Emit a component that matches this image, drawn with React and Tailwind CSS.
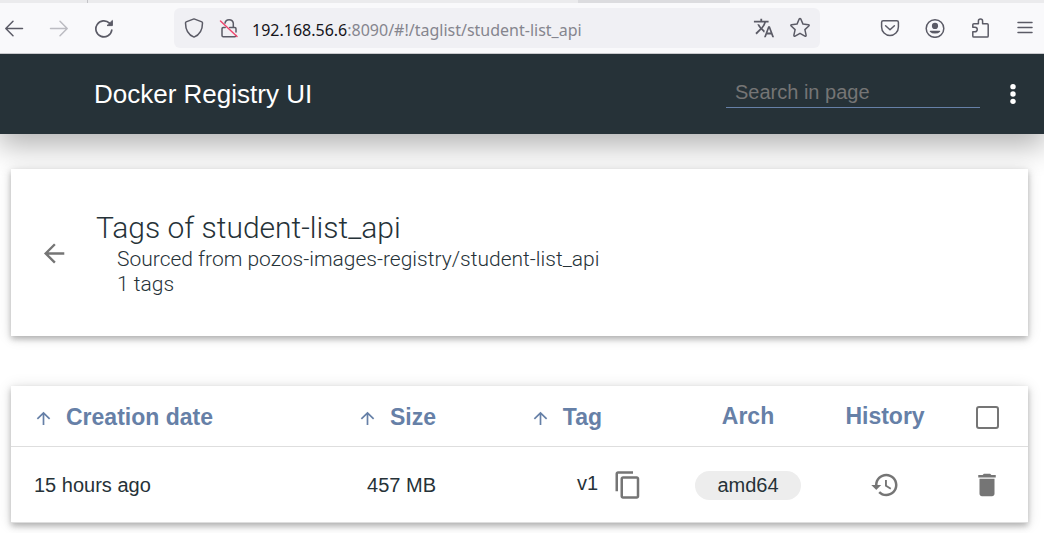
import React from "react";

const stroke = {
  fill: "none",
  stroke: "currentColor",
  strokeWidth: 1.5,
  strokeLinecap: "round",
  strokeLinejoin: "round",
};

function Svg({ size, box = "0 0 24 24", className = "", children, ...rest }) {
  return (
    <svg width={size} height={size} viewBox={box} className={"block shrink-0 " + className} aria-hidden="true" {...rest}>
      {children}
    </svg>
  );
}

function BrowserToolbar() {
  return (
    <div className="relative z-10">
      <div className="flex h-[3px] bg-[#ebebed]">
        <div className="w-[88px] border-r border-[#c4c4c8]" />
        <div className="ml-[490px] w-[152px] bg-[#dcdcdf]" />
      </div>
      <div className="flex h-[51px] items-center border-b border-[#c9c9cd] bg-[#f9f9fb] text-[#5b5b66]">
        <div className="flex w-[174px] shrink-0 items-center gap-[25px] pl-1">
          <button type="button" aria-label="Back">
            <Svg size={20} box="0 0 20 20" {...stroke}>
              <path d="M2 10.5H18.5M9 3.3L1.8 10.5L9 17.7" />
            </Svg>
          </button>
          <button type="button" aria-label="Forward" disabled className="text-[#bcbcc2]">
            <Svg size={20} box="0 0 20 20" {...stroke}>
              <path d="M1.5 10.5H18M11 3.3L18.2 10.5L11 17.7" />
            </Svg>
          </button>
          <button type="button" aria-label="Reload">
            <Svg size={20} box="0 0 20 20" {...stroke} strokeWidth={1.7}>
              <path d="M17.8 12A8 8 0 1 1 15.5 5.2" />
              <path d="M18.4 2.8V7.6H13.4Z" fill="currentColor" strokeWidth="1" />
            </Svg>
          </button>
        </div>
        <div className="flex h-10 min-w-0 flex-1 items-center rounded-md bg-[#f0f0f4] pr-[9px] pl-[10px]">
          <Svg size={20} box="0 0 20 20" {...stroke}>
            <path d="M10 0.9L17.9 3.9C18.4 4.1 18.5 4.4 18.5 4.9C18.5 10.5 16.6 16.4 10 19.1C3.4 16.4 1.5 10.5 1.5 4.9C1.5 4.4 1.6 4.1 2.1 3.9Z" />
          </Svg>
          <Svg size={20} box="0 0 20 20" className="ml-[15px]" {...stroke}>
            <path d="M6 5.2A4.2 4.2 0 0 1 14.3 5.2V9M6.2 9.5H4.2Q3 9.5 3 10.7V17.6Q3 18.8 4.2 18.8H15.8Q17 18.8 17 17.6M10.7 9.5H15.8Q17 9.5 17 10.7V14" />
            <path d="M1.5 3L18 18.5" stroke="#f0476f" />
          </Svg>
          <div className="relative ml-[13px] min-w-0 flex-1 pt-[3px] font-['Noto_Sans',sans-serif] text-[16px] leading-6">
            <div className="truncate text-[#85858e]" aria-hidden="true">
              <span className="text-[#15141a]">192.168.56.6</span>:8090/#!/taglist/student-list_api
            </div>
            <input
              type="text"
              aria-label="Address"
              defaultValue="192.168.56.6:8090/#!/taglist/student-list_api"
              className="absolute inset-0 w-full bg-transparent text-transparent outline-none"
            />
          </div>
          <button type="button" aria-label="Translate page">
            <Svg size={22} fill="currentColor">
              <path d="M12.87 15.07l-2.54-2.51.03-.03c1.74-1.94 2.98-4.17 3.71-6.53H17V4h-7V2H8v2H1v1.99h11.17C11.5 7.92 10.44 9.75 9 11.35 8.07 10.32 7.3 9.19 6.69 8h-2c.73 1.63 1.73 3.17 2.98 4.56l-5.09 5.02L4 19l5-5 3.11 3.11.76-2.04zM18.5 10h-2L12 22h2l1.12-3h4.75L21 22h2l-4.5-12zm-2.62 7l1.62-4.33L19.12 17h-3.24z" />
            </Svg>
          </button>
          <button type="button" aria-label="Bookmark page" className="ml-[14px]">
            <Svg size={22} box="0 0 22 22" {...stroke}>
              <path d="M10.2 2Q11 0.8 11.8 2L14 7.1L19.4 7.7Q20.7 8 19.8 9L15.9 12.6L17.1 18.2Q17.1 19.6 15.9 19.1L11 16.3L6.1 19.1Q4.9 19.6 4.9 18.2L6.1 12.6L2.2 9Q1.3 8 2.6 7.7L8 7.1Z" />
            </Svg>
          </button>
        </div>
        <div className="flex w-56 shrink-0 items-center justify-end gap-[25px] pr-[9px]">
          <button type="button" aria-label="Save to Pocket">
            <Svg size={20} box="0 0 20 20" {...stroke}>
              <path d="M3.2 2.7H16.8Q18.4 2.7 18.4 4.3V9A8.4 8.4 0 0 1 1.6 9V4.3Q1.6 2.7 3.2 2.7Z" />
              <path d="M5.6 7.7L10 11.8L14.4 7.7" />
            </Svg>
          </button>
          <button type="button" aria-label="Account">
            <Svg size={20} box="0 0 20 20">
              <circle cx="10" cy="10.5" r="8.8" {...stroke} />
              <circle cx="10" cy="7.9" r="3.1" fill="currentColor" />
              <path d="M5.3 12.8H14.7Q15.6 12.8 15.1 13.7A6 4 0 0 1 4.9 13.7Q4.4 12.8 5.3 12.8Z" fill="currentColor" />
            </Svg>
          </button>
          <button type="button" aria-label="Extensions">
            <Svg size={20} box="0 0 20 20" {...stroke}>
              <path d="M2.8 9.3V6.8Q2.8 5.7 3.9 5.7H8.4V3.2A2 2 0 0 1 12.6 3.2V5.7H17.1Q18.2 5.7 18.2 6.8V17.9Q18.2 19 17.1 19H3.9Q2.8 19 2.8 17.9V13.8H5A2.2 2.2 0 0 0 5 9.3Z" />
            </Svg>
          </button>
          <button type="button" aria-label="Application menu">
            <Svg size={20} box="0 0 20 20" {...stroke}>
              <path d="M3 4.5H17M3 9.5H17M3 14.5H17" />
            </Svg>
          </button>
        </div>
      </div>
    </div>
  );
}

function AppHeader() {
  return (
    <header className="relative flex h-20 items-center bg-[#263238] pr-[18px] pl-[94px] text-white shadow-[0_10px_30px_2px_rgba(0,0,0,0.3)]">
      <h1 className="flex-1 text-[26px] leading-8">Docker Registry UI</h1>
      <input
        type="search"
        aria-label="Search in page"
        placeholder="Search in page"
        className="mb-1 h-8 w-[254px] border-b border-[#6680a7] bg-transparent px-[9px] pt-[2px] text-[20px] outline-none placeholder:text-[#757575]"
      />
      <button type="button" aria-label="Menu" className="ml-[20px]">
        <Svg size={26} fill="currentColor">
          <circle cx="12" cy="5.2" r="2.5" />
          <circle cx="12" cy="12" r="2.5" />
          <circle cx="12" cy="18.8" r="2.5" />
        </Svg>
      </button>
    </header>
  );
}

function SortButton({ children }) {
  return (
    <button type="button" className="inline-flex items-center gap-[14px] align-middle">
      <Svg size={17} box="0 0 18 18" className="mt-[3px]" fill="none" stroke="currentColor" strokeWidth="1.8">
        <path d="M9 16V3M2.5 9.5L9 3L15.5 9.5" />
      </Svg>
      <span>{children}</span>
    </button>
  );
}

const card = "relative bg-white shadow-[0_3px_6px_0_rgba(0,0,0,0.26),0_1px_14px_0_rgba(0,0,0,0.12)]";

export default function App() {
  return (
    <div className="min-h-screen bg-white font-['Liberation_Sans',Arial,sans-serif] text-[#263238]">
      <BrowserToolbar />
      <AppHeader />
      <main className="pt-[35px] pr-4 pb-[10px] pl-[11px]">
        <section className={card + " flex items-center px-[30px] pt-[42px] pb-[39px]"}>
          <a href="#back" aria-label="Back to catalog" className="text-[#757575]">
            <Svg size={26} fill="none" stroke="currentColor" strokeWidth="2.2">
              <path d="M21.5 11.5H4.5M12.8 3L4.3 11.5L12.8 20" />
            </Svg>
          </a>
          <div className="ml-[29px] font-['Roboto',sans-serif] font-light text-[#263238]">
            <h2 className="mb-[2px] text-[30px] leading-[34px]">Tags of student-list_api</h2>
            <div className="pl-[21px] text-[21px] leading-[25px]">
              <p>Sourced from pozos-images-registry/student-list_api</p>
              <p>1 tags</p>
            </div>
          </div>
        </section>

        <section className={card + " mt-[50px]"}>
          <table className="w-full table-fixed border-separate border-spacing-0 text-[20px]">
            <colgroup>
              <col />
              <col className="w-[225px]" />
              <col className="w-[205px]" />
              <col className="w-[168px]" />
              <col className="w-[106px]" />
              <col className="w-[90px]" />
            </colgroup>
            <thead>
              <tr className="h-[61px] text-[23px] text-[#6680a7] *:border-b *:border-[#dedede]">
                <th className="pl-[24px] text-left"><SortButton>Creation date</SortButton></th>
                <th className="pr-[23px] text-right"><SortButton>Size</SortButton></th>
                <th className="pr-[62px] text-right"><SortButton>Tag</SortButton></th>
                <th>Arch</th>
                <th>History</th>
                <th className="pl-2">
                  <input
                    type="checkbox"
                    aria-label="Select all tags"
                    className="mx-auto mt-[2px] block size-[23px] appearance-none rounded-[3px] border-2 border-[#757575] bg-white"
                  />
                </th>
              </tr>
            </thead>
            <tbody>
              <tr className="h-[76px] *:border-b *:border-[#dedede]">
                <td className="pl-[23px]">15 hours ago</td>
                <td className="pr-[23px] text-right">457 MB</td>
                <td className="pr-[21px]">
                  <div className="flex items-center justify-end gap-[15px]">
                    <span className="mb-[3px]">v1</span>
                    <button type="button" aria-label="Copy tag" className="text-[#757575]">
                      <Svg size={30} fill="currentColor">
                        <path d="M16 1H4c-1.1 0-2 .9-2 2v14h2V3h12V1zm3 4H8c-1.1 0-2 .9-2 2v14c0 1.1.9 2 2 2h11c1.1 0 2-.9 2-2V7c0-1.1-.9-2-2-2zm0 16H8V7h11v14z" />
                      </Svg>
                    </button>
                  </div>
                </td>
                <td className="text-center">
                  <span className="inline-block rounded-full bg-[#ededed] px-[22px] leading-[29px]">amd64</span>
                </td>
                <td>
                  <button type="button" aria-label="Show history" className="mx-auto block text-[#757575]">
                    <Svg size={30}>
                      <path
                        fill="currentColor"
                        d="M13 3c-4.97 0-9 4.03-9 9H1l3.89 3.89.07.14L9 12H6c0-3.87 3.13-7 7-7s7 3.13 7 7-3.13 7-7 7c-1.93 0-3.68-.79-4.94-2.06l-1.42 1.42C8.27 19.99 10.51 21 13 21c4.97 0 9-4.03 9-9s-4.03-9-9-9zm-1 5v5l4.28 2.54.72-1.21-3.5-2.08V8H12z"
                      />
                    </Svg>
                  </button>
                </td>
                <td className="pl-2">
                  <button type="button" aria-label="Delete tag" className="mx-auto block text-[#757575]">
                    <Svg size={30} fill="currentColor">
                      <path d="M6 19c0 1.1.9 2 2 2h8c1.1 0 2-.9 2-2V7H6v12zM19 4h-3.5l-1-1h-5l-1 1H5v2h14V4z" />
                    </Svg>
                  </button>
                </td>
              </tr>
            </tbody>
          </table>
        </section>
      </main>
    </div>
  );
}
